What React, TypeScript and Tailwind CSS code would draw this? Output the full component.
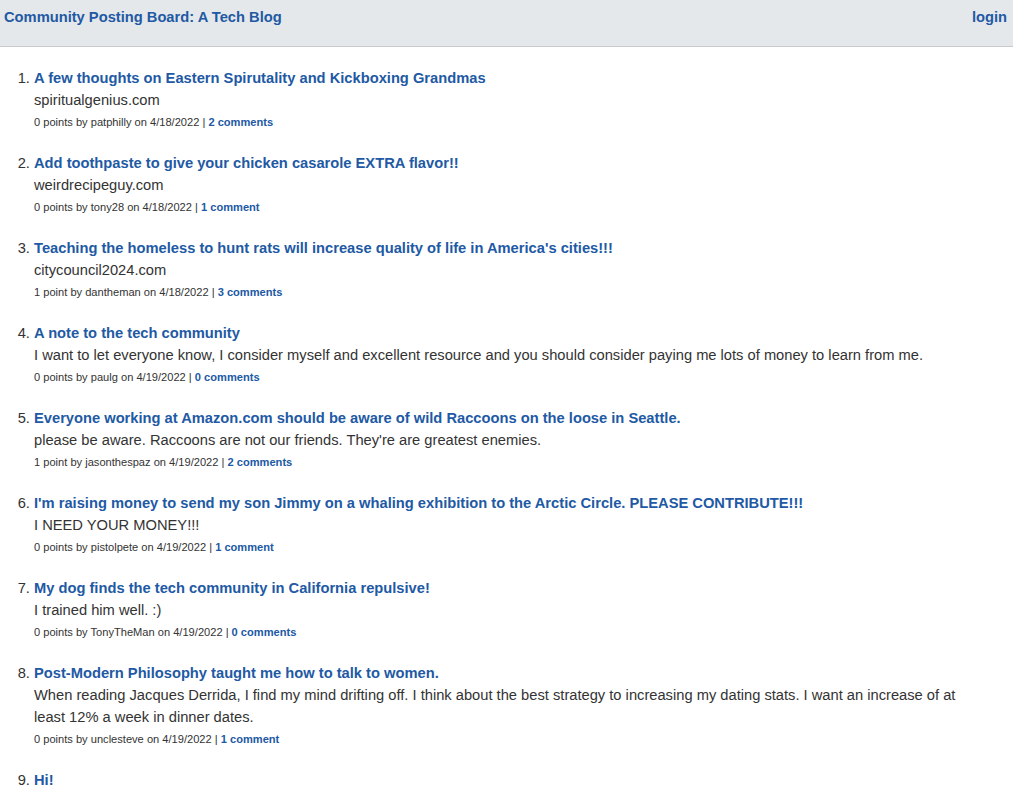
import React from "react";

type Post = { title: string; body: string; points: string; user: string; date: string; comments: string };

const posts: Post[] = [
  { title: "A few thoughts on Eastern Spirutality and Kickboxing Grandmas", body: "spiritualgenius.com", points: "0 points", user: "patphilly", date: "4/18/2022", comments: "2 comments" },
  { title: "Add toothpaste to give your chicken casarole EXTRA flavor!!", body: "weirdrecipeguy.com", points: "0 points", user: "tony28", date: "4/18/2022", comments: "1 comment" },
  { title: "Teaching the homeless to hunt rats will increase quality of life in America's cities!!!", body: "citycouncil2024.com", points: "1 point", user: "dantheman", date: "4/18/2022", comments: "3 comments" },
  { title: "A note to the tech community", body: "I want to let everyone know, I consider myself and excellent resource and you should consider paying me lots of money to learn from me.", points: "0 points", user: "paulg", date: "4/19/2022", comments: "0 comments" },
  { title: "Everyone working at Amazon.com should be aware of wild Raccoons on the loose in Seattle.", body: "please be aware. Raccoons are not our friends. They're are greatest enemies.", points: "1 point", user: "jasonthespaz", date: "4/19/2022", comments: "2 comments" },
  { title: "I'm raising money to send my son Jimmy on a whaling exhibition to the Arctic Circle. PLEASE CONTRIBUTE!!!", body: "I NEED YOUR MONEY!!!", points: "0 points", user: "pistolpete", date: "4/19/2022", comments: "1 comment" },
  { title: "My dog finds the tech community in California repulsive!", body: "I trained him well. :)", points: "0 points", user: "TonyTheMan", date: "4/19/2022", comments: "0 comments" },
  { title: "Post-Modern Philosophy taught me how to talk to women.", body: "When reading Jacques Derrida, I find my mind drifting off. I think about the best strategy to increasing my dating stats. I want an increase of at least 12% a week in dinner dates.", points: "0 points", user: "unclesteve", date: "4/19/2022", comments: "1 comment" },
  { title: "Hi!", body: "", points: "0 points", user: "someone", date: "4/19/2022", comments: "0 comments" },
];

export default function App() {
  return (
    <div className="min-h-screen bg-white text-[#333] font-['Liberation_Sans',Arial,sans-serif]">
      <header className="h-[47px] bg-[#e5e8ea] border-b border-[#c9cccf] flex justify-between items-start pt-[7px] pl-[4px] pr-[6px]">
        <a className="text-[14.7px] leading-[20px] font-bold text-[#2159a4]">Community Posting Board: A Tech Blog</a>
        <a className="text-[14.7px] leading-[20px] font-bold text-[#2159a4]">login</a>
      </header>
      <ol className="list-decimal pl-[34px] pr-[34px] mt-[20px]">
        {posts.map((p, i) => (
          <li key={i} className="mb-[19px] text-[14.7px] leading-[22px] marker:text-[#333]">
            <div className="font-bold text-[#2159a4]">{p.title}</div>
            <div>{p.body}</div>
            <div className="text-[11.1px] leading-[22px]">
              {p.points} by {p.user} on {p.date} | <span className="font-bold text-[#2159a4]">{p.comments}</span>
            </div>
          </li>
        ))}
      </ol>
    </div>
  );
}
